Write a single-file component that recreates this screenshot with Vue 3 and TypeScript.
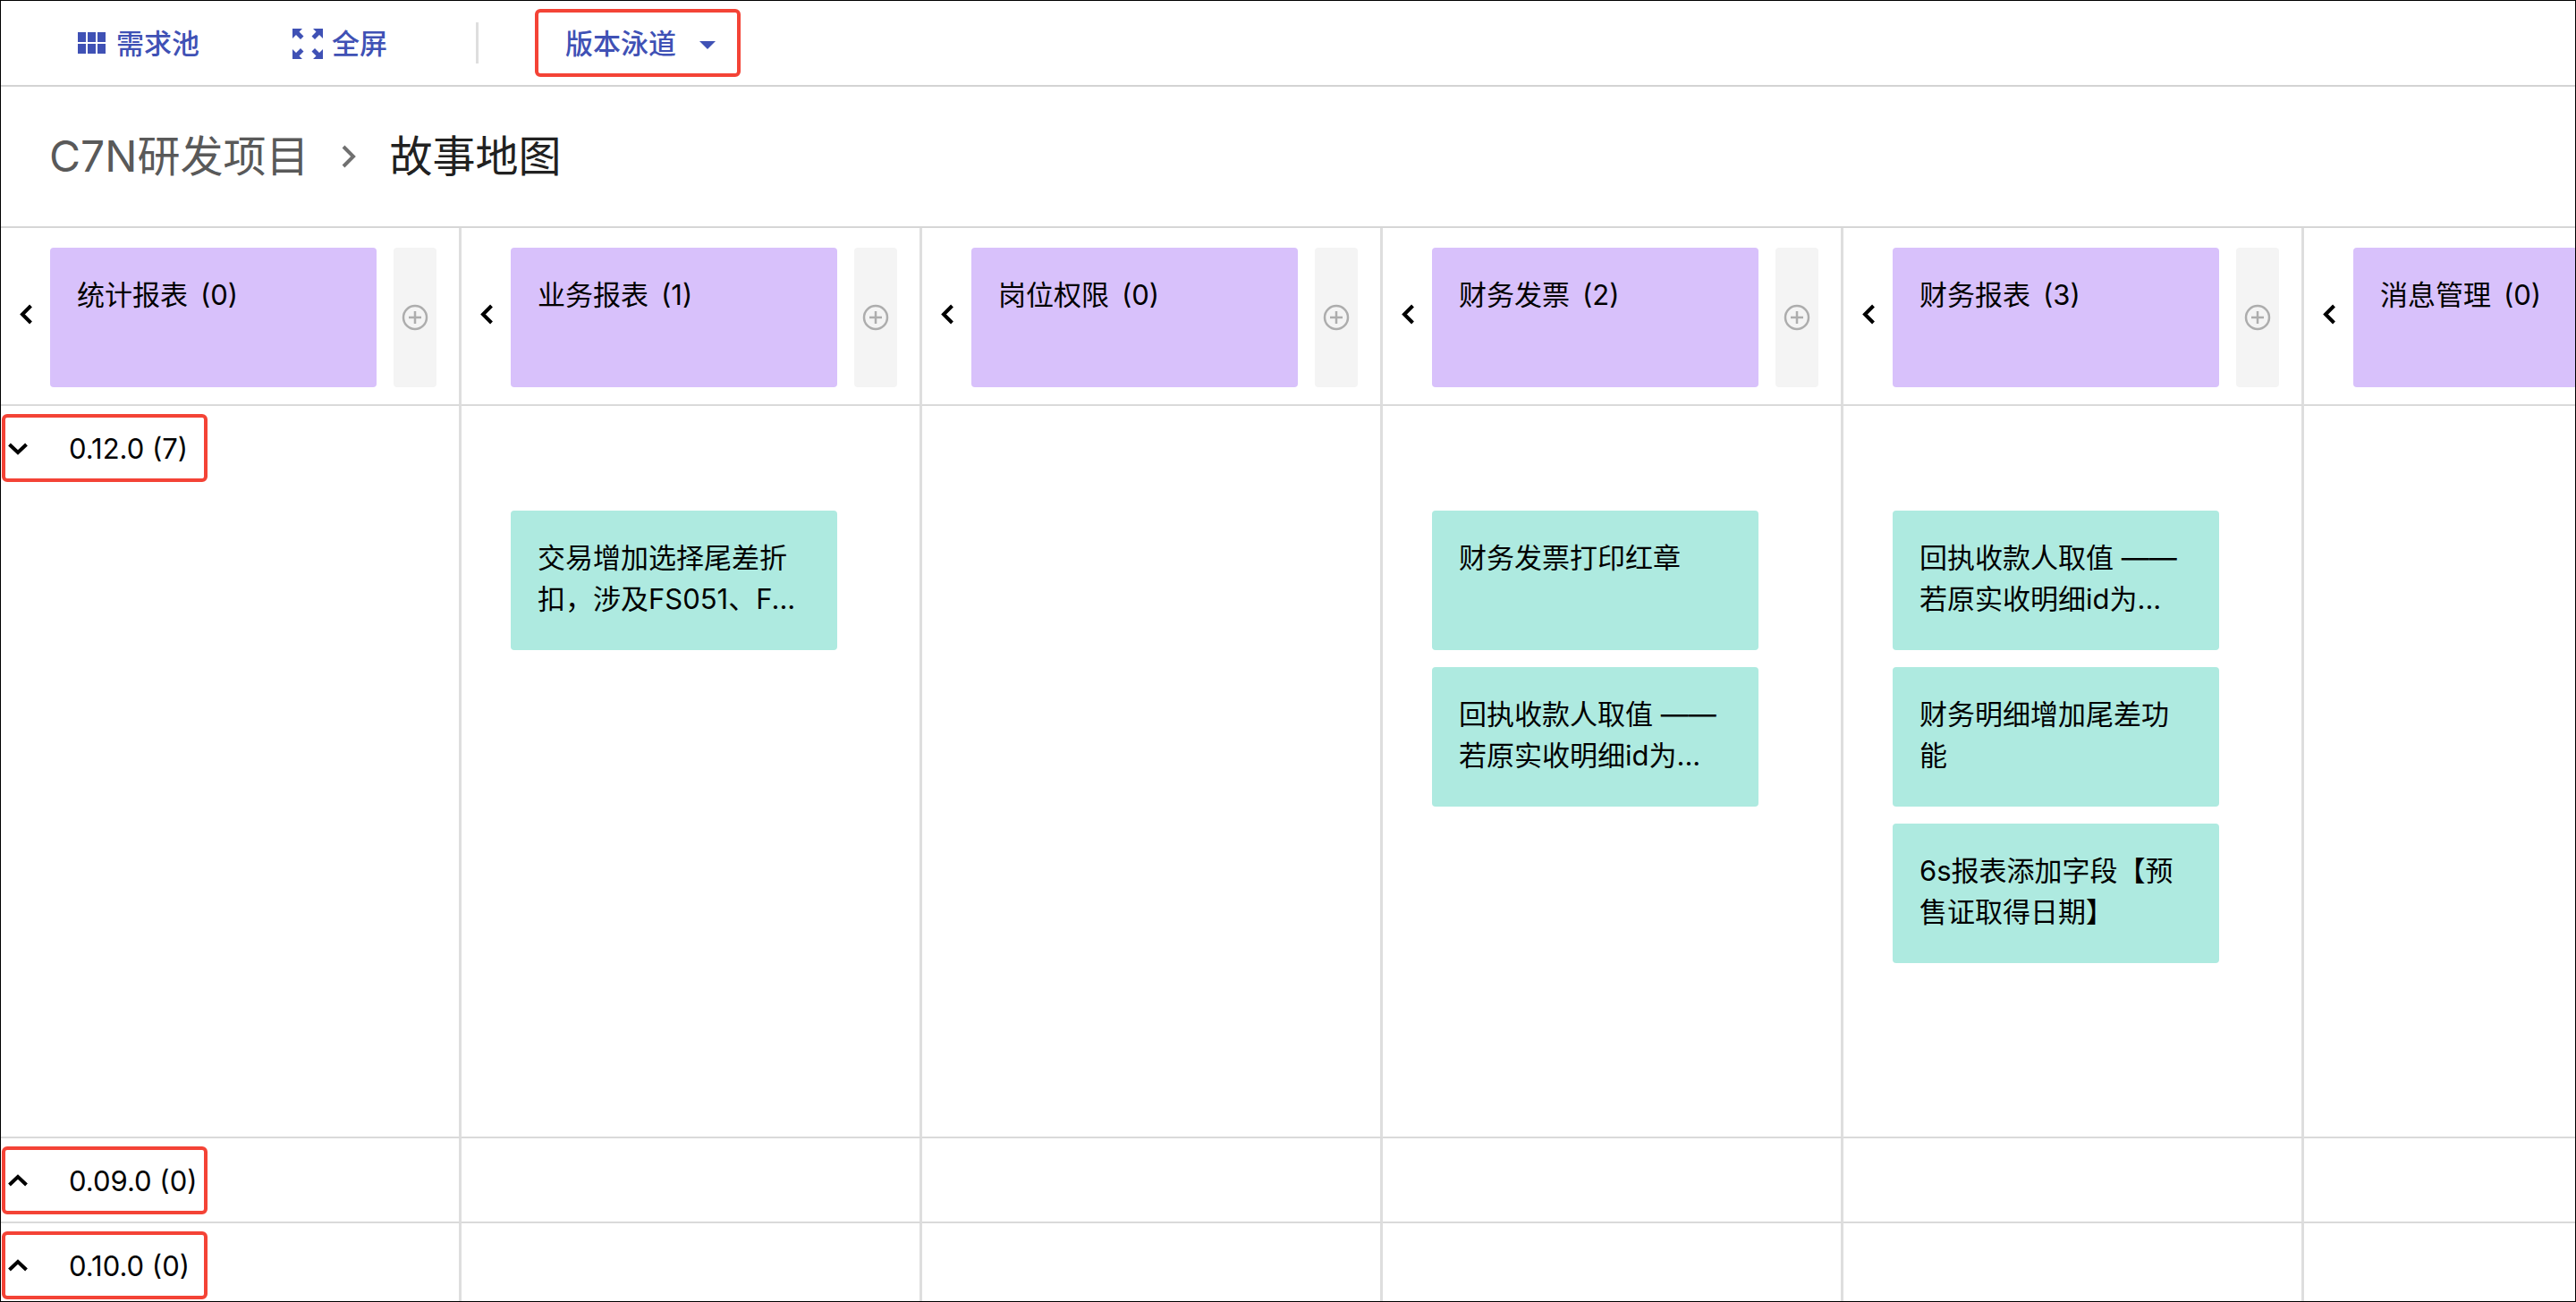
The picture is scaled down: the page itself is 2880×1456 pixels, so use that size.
<script setup lang="ts">
import { ref } from 'vue'

interface Lane {
  version: string
  count: number
  open: boolean
  stories: Record<string, string[]>
}

const epics = [
  { name: '统计报表', count: 0 },
  { name: '业务报表', count: 1 },
  { name: '岗位权限', count: 0 },
  { name: '财务发票', count: 2 },
  { name: '财务报表', count: 3 },
  { name: '消息管理', count: 0 },
]

const lanes = ref<Lane[]>([
  {
    version: '0.12.0',
    count: 7,
    open: true,
    stories: {
      业务报表: ['交易增加选择尾差折扣，涉及FS051、F...'],
      财务发票: ['财务发票打印红章', '回执收款人取值 ——若原实收明细id为...'],
      财务报表: [
        '回执收款人取值 ——若原实收明细id为...',
        '财务明细增加尾差功能',
        '6s报表添加字段【预售证取得日期】',
      ],
    },
  },
  { version: '0.09.0', count: 0, open: false, stories: {} },
  { version: '0.10.0', count: 0, open: false, stories: {} },
])

const swimlane = ref('version')
</script>

<template>
  <div class="page" lang="zh-CN">
    <header class="toolbar">
      <div class="tools">
        <button type="button" class="tool">
          <svg width="34" height="34" viewBox="0 0 34 34" aria-hidden="true">
            <path d="M1 4h9v11H1zM12 4h9v11h-9zM23 4h9v11h-9zM1 17h9v11H1zM12 17h9v11h-9zM23 17h9v11h-9z" fill="currentColor" />
          </svg>
          <span>需求池</span>
        </button>
        <button type="button" class="tool">
          <svg width="34" height="34" viewBox="0 0 34 34" aria-hidden="true">
            <g fill="currentColor">
              <path d="M0 0H11L7.500 3.500L12.500 8.500L9 12L4 7L0 11Z" />
              <path d="M34 0H23L26.500 3.500L21.500 8.500L25 12L30 7L34 11Z" />
              <path d="M0 34H11L7.500 30.500L12.500 25.500L9 22L4 27L0 23Z" />
              <path d="M34 34H23L26.500 30.500L21.500 25.500L25 22L30 27L34 23Z" />
            </g>
          </svg>
          <span>全屏</span>
        </button>
      </div>
      <span class="divider"></span>
      <div class="lane-select marked">
        <select v-model="swimlane" aria-label="泳道">
          <option value="version">版本泳道</option>
        </select>
        <svg class="caret" width="18" height="9" viewBox="0 0 18 9" aria-hidden="true">
          <path d="M0 0H18L9 9Z" fill="currentColor" />
        </svg>
      </div>
    </header>

    <nav class="crumbs" aria-label="面包屑">
      <a href="#">C7N研发项目</a>
      <svg width="16" height="26" viewBox="0 0 16 26" aria-hidden="true">
        <path d="M2 2L13 13L2 24" fill="none" stroke="#707070" stroke-width="4" />
      </svg>
      <h1>故事地图</h1>
    </nav>

    <main class="board">
      <div class="row">
        <section v-for="epic in epics" :key="epic.name" class="cell epic-cell">
          <button type="button" class="collapse" :aria-label="`收起${epic.name}`">
            <svg width="16" height="30" viewBox="0 0 16 30" aria-hidden="true">
              <path d="M13.500 2L4 11.500L13.500 21" fill="none" stroke="currentColor" stroke-width="4" />
            </svg>
          </button>
          <div class="card epic">
            <span>{{ epic.name }}</span>
            <span>({{ epic.count }})</span>
          </div>
          <button type="button" class="add" :aria-label="`添加到${epic.name}`">
            <svg width="30" height="30" viewBox="0 0 30 30" aria-hidden="true">
              <g fill="none" stroke="currentColor" stroke-width="2.500">
                <circle cx="15" cy="15" r="13" />
                <path d="M15 8V22M8 15H22" />
              </g>
            </svg>
          </button>
        </section>
      </div>

      <div v-for="lane in lanes" :key="lane.version" class="row lane" :class="{ open: lane.open }">
        <div v-for="(epic, i) in epics" :key="epic.name" class="cell">
          <button
            v-if="i === 0"
            type="button"
            class="lane-toggle marked"
            :aria-expanded="lane.open"
            @click="lane.open = !lane.open"
          >
            <svg width="24" height="16" viewBox="0 0 24 16" aria-hidden="true">
              <path
                :d="lane.open ? 'M2.500 3L12 12L21.500 3' : 'M2.500 12L12 3L21.500 12'"
                fill="none"
                stroke="currentColor"
                stroke-width="4"
              />
            </svg>
            <span>{{ lane.version }} ({{ lane.count }})</span>
          </button>
          <div v-else-if="lane.open" class="stories">
            <article v-for="story in lane.stories[epic.name]" :key="story" class="card story">{{ story }}</article>
          </div>
        </div>
      </div>
    </main>
  </div>
</template>

<style>
body {
  margin: 0;
  background: #fff;
}
</style>

<style scoped>
.page {
  display: flex;
  flex-direction: column;
  box-sizing: border-box;
  height: 100vh;
  overflow: hidden;
  border: 1px solid #000;
  background: #fff;
  color: #000;
  font-family: Inter, 'Noto Sans CJK SC', sans-serif;
  font-size: 31px;
  line-height: 46px;
}

button,
select {
  margin: 0;
  padding: 0;
  border: 0;
  background: none;
  color: inherit;
  font: inherit;
  cursor: pointer;
}

.marked {
  box-sizing: border-box;
  width: 230px;
  height: 76px;
  border: 4px solid #f44336;
  border-radius: 6px;
}

.toolbar {
  display: flex;
  flex: none;
  align-items: center;
  height: 94px;
  padding-left: 85px;
  border-bottom: 2px solid #d3d3d3;
  color: #3f51b5;
  font-weight: 500;
}

.tools {
  display: flex;
  gap: 104px;
  margin-right: 99px;
  padding-top: 2px;
}

.tool {
  display: flex;
  align-items: center;
  gap: 10px;
}

.divider {
  width: 3px;
  height: 46px;
  margin-right: 63px;
  background: #dedede;
}

.lane-select {
  position: relative;
}

.lane-select select {
  width: 100%;
  height: 100%;
  padding: 2px 0 0 30px;
  appearance: none;
  outline: none;
}

.caret {
  position: absolute;
  top: 32px;
  right: 24px;
  pointer-events: none;
}

.crumbs {
  display: flex;
  flex: none;
  align-items: center;
  gap: 37px;
  height: 156px;
  padding-left: 54px;
  border-bottom: 2px solid #d6d6d6;
  font-size: 48px;
}

.crumbs a {
  color: #595959;
  text-decoration: none;
}

.crumbs h1 {
  margin: 0;
  color: #212121;
  font-size: 48px;
  font-weight: 400;
}

.board {
  display: flex;
  flex: 1;
  flex-direction: column;
  overflow: hidden;
}

.row {
  display: flex;
  flex: none;
}

.cell {
  flex: none;
  box-sizing: border-box;
  width: 515px;
  border-right: 3px solid #dedede;
  border-bottom: 2px solid #dadada;
}

.epic-cell {
  display: flex;
  padding: 22px 0 19px;
}

.collapse {
  display: flex;
  align-items: center;
  justify-content: center;
  width: 55px;
}

.card {
  box-sizing: border-box;
  width: 365px;
  height: 156px;
  padding: 30px;
  border-radius: 4px;
}

.epic {
  display: flex;
  gap: 14px;
  background: #d8c1fb;
}

.add {
  display: flex;
  align-items: center;
  justify-content: center;
  width: 48px;
  margin-left: 19px;
  border-radius: 4px;
  background: #f4f4f4;
  color: #adadad;
}

.lane {
  min-height: 95px;
}

.lane.open {
  min-height: 819px;
}

.lane-toggle {
  display: flex;
  align-items: center;
  gap: 45px;
  margin: 9px 0 0 1px;
  padding: 2px 0 0 2px;
  white-space: nowrap;
}

.stories {
  display: flex;
  flex-direction: column;
  gap: 19px;
  padding: 117px 0 19px 55px;
}

.story {
  overflow: hidden;
  background: #aeeae0;
}
</style>
